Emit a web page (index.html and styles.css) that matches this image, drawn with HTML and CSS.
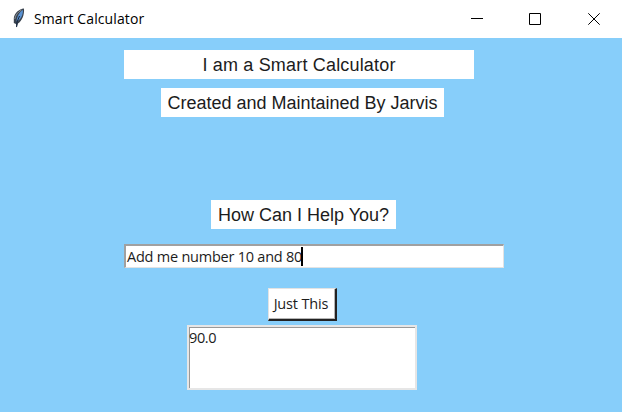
FILE: index.html
```
<!DOCTYPE html>
<html lang="en">
<head>
<meta charset="utf-8">
<title>Smart Calculator</title>
<link rel="stylesheet" href="styles.css">
</head>
<body>
<header class="titlebar">
  <svg class="feather" width="14" height="22" viewBox="0 0 14 22">
    <path d="M12 1.5 C7 2 2.5 6 1.8 11 L1.8 16 L4 17 L4.6 20.5 L6 16.5 C10 14 12.5 8 12 1.5Z" fill="#39424e"/>
    <path d="M11 3 C7.5 5 5 9 4.5 14.5 C8.5 13 11 8.500 11 3Z" fill="#5b93d3"/>
    <path d="M9.500 3 C6 5 3.500 8 2.800 12" fill="none" stroke="#8b9095" stroke-width="1"/>
    <path d="M7.500 9 L5 15 L4.600 20" fill="none" stroke="#14253f" stroke-width="1"/>
  </svg>
  <span class="title">Smart Calculator</span>
  <div class="controls">
    <svg width="12" height="12" viewBox="0 0 12 12"><path d="M0 5.5H12"/></svg>
    <svg width="12" height="12" viewBox="0 0 12 12"><path d="M.5 .5H11.5V11.5H.5Z"/></svg>
    <svg width="12" height="12" viewBox="0 0 12 12"><path d="M.3 .3L11.7 11.7M11.7 .3L.3 11.7"/></svg>
  </div>
</header>
<main class="window">
  <div class="label heading"><span>I am a Smart Calculator</span></div>
  <div class="label credit"><span>Created and Maintained By Jarvis</span></div>
  <div class="label question"><span>How Can I Help You?</span></div>
  <div class="entry"><span class="entry-text">Add me number 10 and 80</span><i class="caret"></i></div>
  <button class="submit"><span>Just This</span></button>
  <div class="result"><span>90.0</span></div>
</main>
</body>
</html>
```
FILE: styles.css
```
* { box-sizing: border-box; }
body {
  margin: 0;
  width: 622px;
  height: 412px;
  overflow: hidden;
  background: #87cefa;
  color: #1c1c1c;
  font-family: "Open Sans", "Noto Sans", sans-serif;
}
.titlebar {
  display: flex;
  align-items: center;
  height: 38px;
  padding: 0 22px 0 12px;
  background: #fff;
  color: #000;
}
.feather { margin-top: -2px; }
.title {
  margin-left: 8px;
  font-size: 14px;
  line-height: 20px;
  letter-spacing: 0.1px;
  white-space: nowrap;
}
.controls { display: flex; gap: 47px; margin-left: auto; }
.controls svg { fill: none; stroke: #000; stroke-width: 1; }
.controls svg:first-child { margin-right: -1px; }
.window { display: flex; flex-direction: column; height: 374px; padding-top: 12px; }
.label {
  display: flex;
  align-items: center;
  justify-content: center;
  flex: none;
  height: 29px;
  padding-top: 2px;
  background: #fff;
  font: 18px/27px "Liberation Sans", Arial, sans-serif;
  white-space: nowrap;
}
.heading { width: 350px; margin-left: 124px; letter-spacing: 0.18px; }
.credit { width: 283px; margin: 9px 0 0 161px; }
.question { width: 185px; margin: 83px 0 0 211px; }
.entry {
  display: flex;
  align-items: center;
  flex: none;
  width: 380px;
  height: 24px;
  margin: 15px 0 0 124px;
  padding-left: 1px;
  border: 2px solid;
  border-width: 2px 1px 1px 2px;
  border-color: #a0a0a0 #e3e3e3 #e3e3e3 #a0a0a0;
  background: #fff;
  font-size: 14.5px;
  letter-spacing: -0.23px;
  white-space: nowrap;
}
.caret { width: 2px; height: 19px; margin-left: -1px; background: #000; }
.submit {
  flex: none;
  width: 69px;
  height: 33px;
  margin: 20px 0 0 268px;
  padding: 0 2px 0 0;
  border: solid;
  border-width: 1px 2px 2px 1px;
  border-color: #e3e3e3 #222 #222 #e3e3e3;
  background: #fff;
  box-shadow: inset -1px -1px #b5b5b5;
  color: #1c1c1c;
  font: 14.5px/20px "Open Sans", sans-serif;
  letter-spacing: -0.15px;
  white-space: nowrap;
}
.result {
  flex: none;
  width: 230px;
  height: 65px;
  margin: 4px 0 0 187px;
  border: 2px solid #e6e6e6;
  background: #fff;
  box-shadow: inset 1px 1px #999;
  font-size: 14.5px;
  line-height: 21px;
  letter-spacing: -0.4px;
}
```
